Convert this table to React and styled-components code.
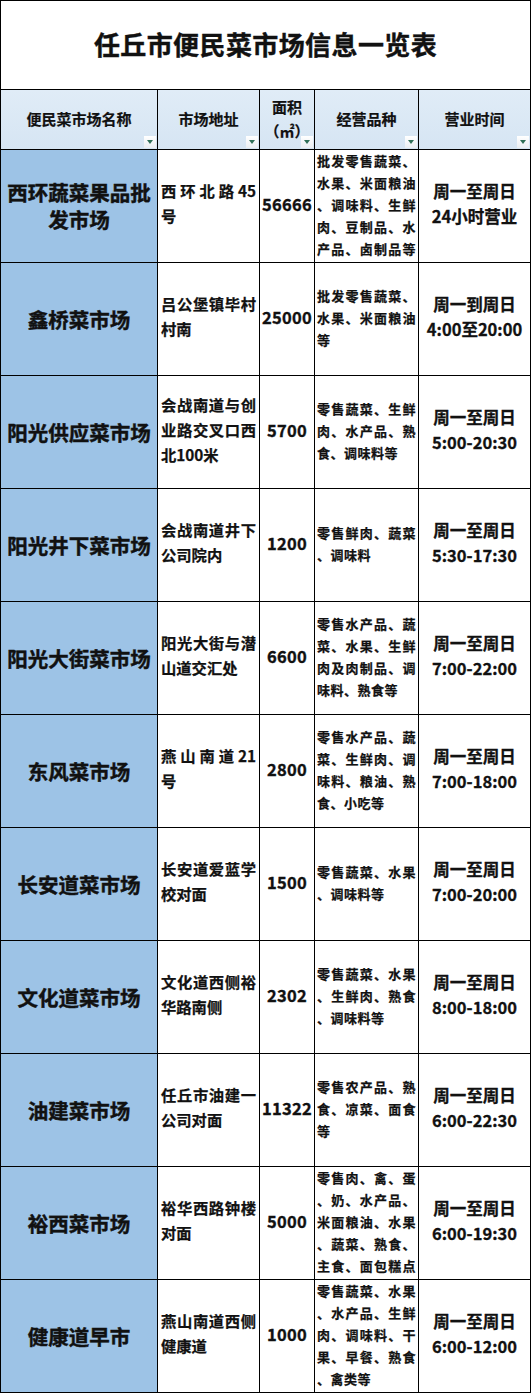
import React from 'react';
import styled, { createGlobalStyle } from 'styled-components';

const GlobalStyle = createGlobalStyle`
  html, body {
    margin: 0;
    padding: 0;
    background: #ffffff;
  }
  body {
    font-family: "Noto Sans CJK SC", "Noto Sans", sans-serif;
    color: #111111;
  }
  * {
    box-sizing: border-box;
  }
`;

const Sheet = styled.div`
  width: 531px;
  border-left: 1px solid #000;
  border-top: 1px solid #000;
`;

const TitleBar = styled.div`
  height: 89px;
  display: flex;
  align-items: center;
  justify-content: center;
  border-right: 1px solid #000;
  border-bottom: 1px solid #000;
  font-size: 26px;
  font-weight: 700;
  letter-spacing: 0.4px;
  padding-bottom: 4px;
  -webkit-text-stroke: 0.4px #111;
`;

const Grid = styled.div`
  display: grid;
  grid-template-columns: 157px 102px 55px 104px 112px;
  grid-template-rows: 60px repeat(11, 113px);
`;

const HeadCell = styled.div`
  position: relative;
  display: flex;
  flex-direction: column;
  align-items: center;
  justify-content: center;
  background: linear-gradient(#e0ecf7, #d6e5f3);
  border-right: 1px solid #000;
  border-bottom: 1px solid #000;
  font-size: 15px;
  font-weight: 700;
  line-height: 24px;
  padding-bottom: 2px;
  -webkit-text-stroke: 0.2px #111;
`;

const FilterButton = styled.span`
  position: absolute;
  right: 1px;
  bottom: 1px;
  width: 12px;
  height: 12px;
  background: linear-gradient(#ffffff, #eaeef2);
  display: flex;
  align-items: center;
  justify-content: center;
  -webkit-text-stroke: 0;

  &::after {
    content: '';
    width: 0;
    height: 0;
    border-left: 3px solid transparent;
    border-right: 3px solid transparent;
    border-top: 4px solid #2f6f57;
  }
`;

const Cell = styled.div`
  display: flex;
  flex-direction: column;
  justify-content: center;
  border-right: 1px solid #000;
  border-bottom: 1px solid #000;
  font-weight: 700;
  -webkit-text-stroke: 0.25px #111;
  background: ${(p) => (p.$tone === 'blue' ? '#9dc3e6' : '#ffffff')};
`;

const NameCell = styled(Cell)`
  align-items: center;
  text-align: center;
  font-size: 20.5px;
  line-height: 27px;
  padding: 0 4px 0 4px;
  -webkit-text-stroke: 0.45px #111;
`;

const AddressCell = styled(Cell)`
  font-size: 15.3px;
  line-height: 25px;
  padding: 0 3px 6px 3px;
`;

const AreaCell = styled(Cell)`
  align-items: center;
  font-size: 16.5px;
  letter-spacing: 0.3px;
  padding-bottom: 4px;
  -webkit-text-stroke: 0.35px #111;
`;

const GoodsCell = styled(Cell)`
  font-size: 13px;
  line-height: 22px;
  letter-spacing: 0.5px;
  padding: 0 2px 2px 2px;
`;

const HoursCell = styled(Cell)`
  align-items: center;
  text-align: center;
  font-size: 16.5px;
  line-height: 25px;
  padding-bottom: 4px;
  -webkit-text-stroke: 0.3px #111;
`;

const Line = styled.div`
  text-align: left;
  text-align-last: ${(p) => (p.$justify ? 'justify' : 'left')};
`;

const markets = [
  {
    name: '西环蔬菜果品批发市场',
    address: ['西环北路45', '号'],
    area: '56666',
    goods: ['批发零售蔬菜、', '水果、米面粮油', '、调味料、生鲜', '肉、豆制品、水', '产品、卤制品等'],
    hours: ['周一至周日', '24小时营业'],
  },
  {
    name: '鑫桥菜市场',
    address: ['吕公堡镇毕村', '村南'],
    area: '25000',
    goods: ['批发零售蔬菜、', '水果、米面粮油', '等'],
    hours: ['周一到周日', '4:00至20:00'],
  },
  {
    name: '阳光供应菜市场',
    address: ['会战南道与创', '业路交叉口西', '北100米'],
    area: '5700',
    goods: ['零售蔬菜、生鲜', '肉、水产品、熟', '食、调味料等'],
    hours: ['周一至周日', '5:00-20:30'],
  },
  {
    name: '阳光井下菜市场',
    address: ['会战南道井下', '公司院内'],
    area: '1200',
    goods: ['零售鲜肉、蔬菜', '、调味料'],
    hours: ['周一至周日', '5:30-17:30'],
  },
  {
    name: '阳光大街菜市场',
    address: ['阳光大街与潜', '山道交汇处'],
    area: '6600',
    goods: ['零售水产品、蔬', '菜、水果、生鲜', '肉及肉制品、调', '味料、熟食等'],
    hours: ['周一至周日', '7:00-22:00'],
  },
  {
    name: '东风菜市场',
    address: ['燕山南道21', '号'],
    area: '2800',
    goods: ['零售水产品、蔬', '菜、生鲜肉、调', '味料、粮油、熟', '食、小吃等'],
    hours: ['周一至周日', '7:00-18:00'],
  },
  {
    name: '长安道菜市场',
    address: ['长安道爱蓝学', '校对面'],
    area: '1500',
    goods: ['零售蔬菜、水果', '、调味料等'],
    hours: ['周一至周日', '7:00-20:00'],
  },
  {
    name: '文化道菜市场',
    address: ['文化道西侧裕', '华路南侧'],
    area: '2302',
    goods: ['零售蔬菜、水果', '、生鲜肉、熟食', '、调味料等'],
    hours: ['周一至周日', '8:00-18:00'],
  },
  {
    name: '油建菜市场',
    address: ['任丘市油建一', '公司对面'],
    area: '11322',
    goods: ['零售农产品、熟', '食、凉菜、面食', '等'],
    hours: ['周一至周日', '6:00-22:30'],
  },
  {
    name: '裕西菜市场',
    address: ['裕华西路钟楼', '对面'],
    area: '5000',
    goods: ['零售肉、禽、蛋', '、奶、水产品、', '米面粮油、水果', '、蔬菜、熟食、', '主食、面包糕点'],
    hours: ['周一至周日', '6:00-19:30'],
  },
  {
    name: '健康道早市',
    address: ['燕山南道西侧', '健康道'],
    area: '1000',
    goods: ['零售蔬菜、水果', '、水产品、生鲜', '肉、调味料、干', '果、早餐、熟食', '、禽类等'],
    hours: ['周一至周日', '6:00-12:00'],
  },
];

// a line is stretched when it is not the last one, or when it fills the cell
const Lines = ({ lines, full }) =>
  lines.map((text, i) => (
    <Line key={i} $justify={i < lines.length - 1 || text.length >= full}>
      {text}
    </Line>
  ));

const App = () => {
  return (
    <>
      <GlobalStyle />
      <Sheet>
        <TitleBar>任丘市便民菜市场信息一览表</TitleBar>
        <Grid>
          <HeadCell>
            便民菜市场名称
            <FilterButton />
          </HeadCell>
          <HeadCell>
            市场地址
            <FilterButton />
          </HeadCell>
          <HeadCell>
            <div>面积</div>
            <div>（㎡）</div>
            <FilterButton />
          </HeadCell>
          <HeadCell>
            经营品种
            <FilterButton />
          </HeadCell>
          <HeadCell>
            营业时间
            <FilterButton />
          </HeadCell>

          {markets.map((m) => (
            <React.Fragment key={m.name}>
              <NameCell $tone="blue">{m.name}</NameCell>
              <AddressCell>
                <Lines lines={m.address} full={6} />
              </AddressCell>
              <AreaCell>{m.area}</AreaCell>
              <GoodsCell>
                <Lines lines={m.goods} full={7} />
              </GoodsCell>
              <HoursCell>
                {m.hours.map((h) => (
                  <div key={h}>{h}</div>
                ))}
              </HoursCell>
            </React.Fragment>
          ))}
        </Grid>
      </Sheet>
    </>
  );
};

export default App;
